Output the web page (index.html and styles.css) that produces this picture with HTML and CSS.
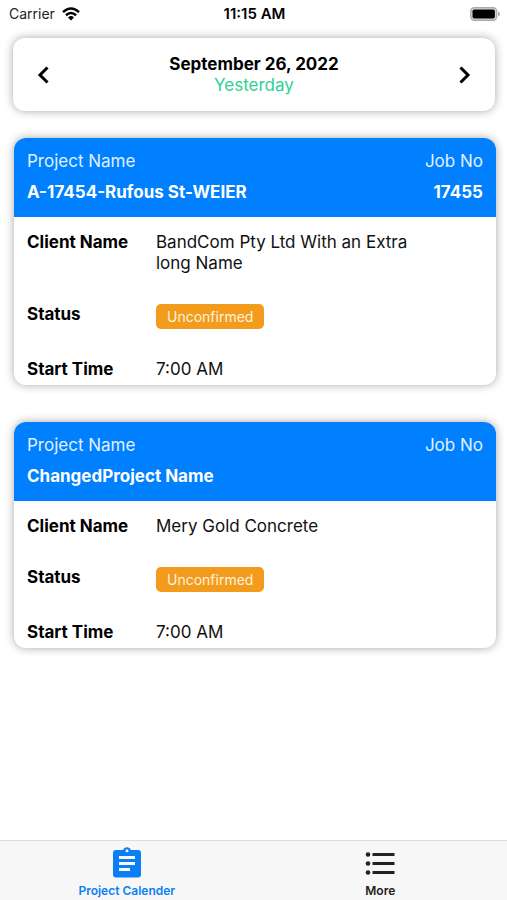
FILE: index.html
```html
<!DOCTYPE html>
<html lang="en">
<head>
<meta charset="utf-8">
<meta name="viewport" content="width=device-width, initial-scale=1">
<title>Project Calender</title>
<link rel="stylesheet" href="styles.css">
</head>
<body>
<header class="status-bar">
  <div class="carrier">
    <span>Carrier</span>
    <svg class="wifi" viewBox="0 0 18 14" aria-hidden="true"><path d="M1 5.2Q9-2.2 17 5.2M3.9 8.2Q9 3.7 14.1 8.2" fill="none" stroke="currentColor" stroke-width="2.5"/><path d="M6 10.4Q9 7.8 12 10.4L9 13.6Z" fill="currentColor"/></svg>
  </div>
  <time class="clock">11:15 AM</time>
  <svg class="battery" viewBox="0 0 30 14" aria-hidden="true"><rect x=".8" y=".8" width="25.8" height="12.4" rx="3.5" fill="#ddd" stroke="#aaa" stroke-width="1.4"/><rect x="2.5" y="2.5" width="22.4" height="9" rx="1.8" fill="#000"/><path d="M28 4.6q2 .7 2 2.4t-2 2.4z" fill="#aaa"/></svg>
</header>
<main class="content">
  <section class="date-card">
    <button class="arrow" type="button" aria-label="Previous day"><svg viewBox="0 0 12 18" aria-hidden="true"><path d="M10.5 1.5 3 9l7.500 7.500" /></svg></button>
    <div class="date">
      <h1>September 26, 2022</h1>
      <p>Yesterday</p>
    </div>
    <button class="arrow" type="button" aria-label="Next day"><svg viewBox="0 0 12 18" aria-hidden="true"><path d="M1.500 1.500 9 9l-7.500 7.500" /></svg></button>
  </section>
  <div class="projects">
    <article class="project">
      <header class="project-head">
        <div><p>Project Name</p><h2>A-17454-Rufous St-WEIER</h2></div>
        <div class="job"><p>Job No</p><strong>17455</strong></div>
      </header>
      <dl class="details">
        <dt>Client Name</dt><dd>BandCom Pty Ltd With an Extra long Name</dd>
        <dt>Status</dt><dd><span class="badge">Unconfirmed</span></dd>
        <dt>Start Time</dt><dd>7:00 AM</dd>
      </dl>
    </article>
    <article class="project">
      <header class="project-head">
        <div><p>Project Name</p><h2>ChangedProject Name</h2></div>
        <div class="job"><p>Job No</p></div>
      </header>
      <dl class="details">
        <dt>Client Name</dt><dd>Mery Gold Concrete</dd>
        <dt>Status</dt><dd><span class="badge">Unconfirmed</span></dd>
        <dt>Start Time</dt><dd>7:00 AM</dd>
      </dl>
    </article>
  </div>
</main>
<nav class="tabs">
  <a class="tab active" href="#projects">
    <svg viewBox="0 0 32 32" aria-hidden="true"><path fill="currentColor" fill-rule="evenodd" d="M5 3h7.200a4 4 0 0 1 7.600 0H27a3 3 0 0 1 3 3v21.500a3 3 0 0 1-3 3H5a3 3 0 0 1-3-3V6a3 3 0 0 1 3-3Zm11-.700a1.500 1.500 0 1 0 0 3 1.500 1.500 0 0 0 0-3ZM8 9v3h16V9Zm0 6v3h16v-3Zm0 6v3h11v-3Z"/></svg>
    <span>Project Calender</span>
  </a>
  <a class="tab" href="#more">
    <svg viewBox="0 0 32 32" aria-hidden="true"><g fill="currentColor"><circle cx="4" cy="7.500" r="2.300"/><circle cx="4" cy="16.500" r="2.300"/><circle cx="4" cy="25.500" r="2.300"/><path d="M8.500 6h22v3h-22zM8.500 15h22v3h-22zM8.500 24h22v3h-22z"/></g></svg>
    <span>More</span>
  </a>
</nav>
</body>
</html>
```

FILE: styles.css
```css
* {
  box-sizing: border-box;
  margin: 0;
  padding: 0;
}

body {
  display: flex;
  flex-direction: column;
  min-height: 100vh;
  background: #fff;
  color: #000;
  font: 17px/21px Inter, "Liberation Sans", sans-serif;
}

.status-bar {
  display: grid;
  grid-template-columns: 1fr auto 1fr;
  align-items: center;
  height: 27px;
  padding: 0 7px 0 9px;
  font-size: 14px;
}

.carrier {
  display: flex;
  align-items: center;
  gap: 7px;
  color: #222;
}

.wifi {
  width: 18px;
  height: 14px;
  color: #000;
}

.clock {
  font-size: 15px;
  font-weight: 600;
}

.battery {
  justify-self: end;
  width: 30px;
  height: 14px;
}

.content {
  flex: 1;
  padding: 11px 12px 24px 13px;
}

.date-card {
  display: flex;
  align-items: center;
  justify-content: space-between;
  padding: 16px 24px 15px;
  border-radius: 12px;
  background: #fff;
  box-shadow: 0 0 10px rgba(0, 0, 0, 0.35);
}

.date {
  text-align: center;
}

.date h1 {
  font-size: 17px;
  font-weight: 700;
}

.date p {
  color: #2fd195;
}

.arrow {
  display: flex;
  border: 0;
  background: none;
  color: #000;
  cursor: pointer;
}

.arrow svg {
  width: 12px;
  height: 18px;
  fill: none;
  stroke: currentColor;
  stroke-width: 3;
}

.projects {
  display: grid;
  gap: 37px;
  margin: 27px -1px 0 1px;
}

.project {
  border-radius: 12px;
  background: #fff;
  box-shadow: 0 0 10px rgba(0, 0, 0, 0.35);
}

.project-head {
  display: flex;
  justify-content: space-between;
  gap: 16px;
  min-height: 79px;
  padding: 13px;
  border-radius: 12px 12px 0 0;
  background: #0080ff;
  color: #fff;
}

.project-head p {
  margin-bottom: 10px;
  color: #e0f0ff;
}

.project-head h2 {
  font-size: 17px;
  font-weight: 700;
}

.job {
  text-align: right;
}

.details {
  display: grid;
  grid-template-columns: 129px 1fr;
  row-gap: 30px;
  padding: 15px 60px 5px 13px;
}

.details dt {
  font-weight: 700;
}

.details dd {
  color: #111;
}

.badge {
  display: block;
  width: fit-content;
  padding: 2px 11px;
  border-radius: 5px;
  background: #f39b1d;
  color: #fff3df;
  font-size: 14px;
}

.tabs {
  display: grid;
  grid-template-columns: 1fr 1fr;
  border-top: 1px solid #dcdcdc;
  background: #f7f7f7;
}

.tab {
  display: flex;
  flex-direction: column;
  align-items: center;
  gap: 4px;
  padding: 6px 0 1px;
  color: #222;
  font-size: 12px;
  font-weight: 600;
  line-height: 16px;
  text-decoration: none;
}

.tab svg {
  width: 32px;
  height: 32px;
}

.active {
  color: #0a7ff5;
}
```
